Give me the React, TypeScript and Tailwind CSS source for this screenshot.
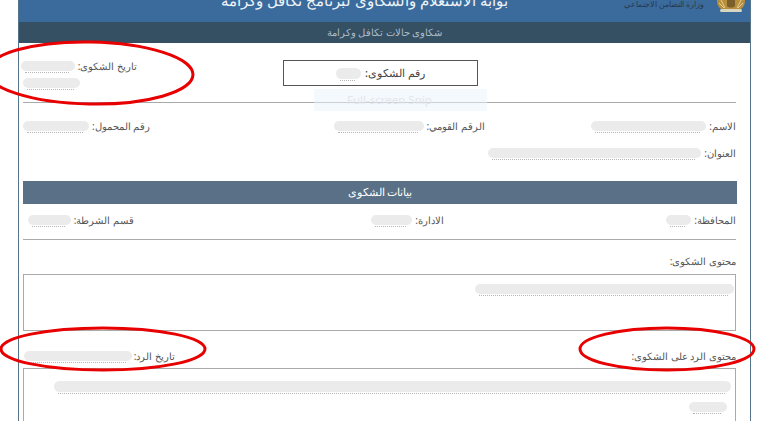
import React from "react";

const font = "font-['Noto_Sans','Liberation_Sans',sans-serif]";

// grey smear that hides personal data, with the bottoms of the hidden text peeking out below it
const Smear = ({ w, h = 10 }: { w: number; h?: number }) => (
  <span className="relative inline-block shrink-0" style={{ width: w, height: h }}>
    <span className="absolute left-[4px] right-[6px] bottom-[-2px] border-b border-dotted border-[#b5b5b5]" />
    <span className="absolute inset-0 rounded-full bg-[#ebebeb] blur-[0.5px]" />
  </span>
);

const Field = ({ label, w }: { label: string; w: number }) => (
  <div className="flex items-center gap-[3px] h-[16px] text-[10px] leading-[16px] text-[#555]">
    <span className="whitespace-nowrap">{label}</span>
    <Smear w={w} />
  </div>
);

const Crest = () => (
  <svg width="28" height="13" viewBox="0 0 28 13">
    <path d="M0 0h28c0 4-1 7-4 9H4C1 7 0 4 0 0z" fill="#b88f3c" />
    <path d="M10 0h8v6c-2 2-6 2-8 0z" fill="#7a5f2c" />
    <path d="M4 0l4 8M24 0l-4 8M2 3l5 5M26 3l-5 5" stroke="#e4cf94" strokeWidth="1" />
    <rect x="3" y="9" width="22" height="3" rx="1.5" fill="#d8d6c0" />
  </svg>
);

export default function App() {
  return (
    <div className={`relative w-[761px] h-[421px] overflow-hidden bg-white ${font}`} dir="rtl">
      <div className="mr-[10px] w-[733px] h-[421px] border-x border-[#557389] overflow-hidden">
        <div className="h-[22px] bg-[#3b6b9c] flex items-end justify-between overflow-hidden pr-[5px] pl-[202px]">
          <div className="flex items-start gap-[13px] h-[22px]">
            <Crest />
            <span className="text-[7.5px] leading-[9px] text-[#26384d] whitespace-nowrap">وزارة التضامن الاجتماعي</span>
          </div>
          <span className="text-[15px] leading-[22px] font-medium text-[#eef3f8] whitespace-nowrap mb-[11px]">بوابة الاستعلام والشكاوى لبرنامج تكافل وكرامة</span>
        </div>
        <div className="h-[21px] bg-[#354f63] flex items-center justify-center text-[10px] text-[#aebdc9]">شكاوى حالات تكافل وكرامة</div>

        <div className="pr-[14px] pl-[4px]">
          <div className="h-[59px] flex items-start pt-[17px]">
            <div className="w-[195px] shrink-0 mr-[258px] h-[26px] border border-[#555] flex items-center justify-center gap-[4px] text-[11px] font-medium text-[#444]">
              <span>رقم الشكوى:</span>
              <Smear w={25} h={11} />
            </div>
            <div className="mr-[146px] -mt-[2px] text-[10px] leading-[16px] text-[#555]">
              <div className="flex items-center gap-[3px]">
                <span className="whitespace-nowrap">تاريخ الشكوى:</span>
                <Smear w={54} />
              </div>
              <div className="flex mt-[4px] mr-[57px]"><Smear w={57} /></div>
            </div>
          </div>
          <div className="h-[1px] bg-[#aaa]" />

          <div className="flex mt-[15px]">
            <div className="w-[253px]"><Field label="الاسم:" w={115} /></div>
            <div className="w-[337px]"><Field label="الرقم القومي:" w={90} /></div>
            <Field label="رقم المحمول:" w={66} />
          </div>
          <div className="mt-[11px]">
            <Field label="العنوان:" w={213} />
          </div>
          <div className="mt-[20px] h-[23px] -mr-[1px] bg-[#5a7086] flex items-center justify-center text-[11px] text-white">بيانات الشكوى</div>

          <div className="flex mt-[8px]">
            <div className="w-[292px]"><Field label="المحافظة:" w={25} /></div>
            <div className="w-[310px]"><Field label="الادارة:" w={41} /></div>
            <Field label="قسم الشرطة:" w={43} />
          </div>
          <div className="h-[1px] mt-[11px] bg-[#aaa]" />

          <div className="text-[10px] leading-[16px] text-[#555] mt-[13px]">محتوى الشكوى:</div>
          <div className="mt-[5px] h-[57px] border border-[#aaa] flex items-start pt-[9px] pr-[1px]">
            <Smear w={259} />
          </div>

          <div className="flex mt-[17px] h-[16px] items-center text-[10px] text-[#555]">
            <span className="w-[561px] shrink-0 whitespace-nowrap">محتوى الرد على الشكوى:</span>
            <div className="flex items-center gap-[2px]">
              <span className="whitespace-nowrap">تاريخ الرد:</span>
              <Smear w={108} />
            </div>
          </div>
          <div className="mt-[4px] h-[70px] border border-[#aaa] flex flex-col items-start gap-[10px] pt-[12px] pr-[4px]">
            <Smear w={677} h={11} />
            <div className="flex pr-[4px]"><Smear w={38} /></div>
          </div>
        </div>
      </div>

      <div className="absolute left-[314px] top-[89px] w-[173px] h-[22px] pl-[33px] bg-[#eaf3fb]/50 text-[11.5px] leading-[22px] text-[#e3e7ea]" dir="ltr">Full-screen Snip</div>

      <svg className="absolute inset-0 pointer-events-none" width="761" height="421" viewBox="0 0 761 421">
        <g fill="none" stroke="#e80000" strokeWidth="3">
          <ellipse cx="90" cy="73" rx="103" ry="31" transform="rotate(1 90 73)" />
          <ellipse cx="103" cy="349" rx="102" ry="21" />
          <ellipse cx="667" cy="349" rx="87" ry="21" />
        </g>
      </svg>
    </div>
  );
}
